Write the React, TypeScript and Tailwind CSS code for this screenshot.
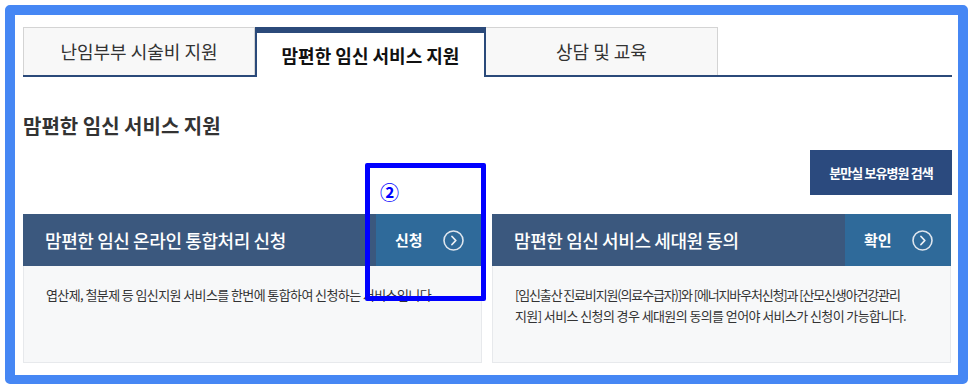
import React from "react";

const FONT = { fontFamily: '"Noto Sans CJK KR", "Noto Sans", sans-serif' };

function CircleArrow() {
  return (
    <svg width="21" height="21" viewBox="0 0 21 21" fill="none">
      <circle cx="10.5" cy="10.5" r="9.5" stroke="#dfe6ee" strokeWidth="1.6" />
      <path d="M9 6.5 L12.8 10.5 L9 14.5" stroke="#eef2f6" strokeWidth="1.8" strokeLinecap="round" strokeLinejoin="round" />
    </svg>
  );
}

interface CardProps {
  title: string;
  action: string;
  children: React.ReactNode;
}

function ServiceCard({ title, action, children }: CardProps) {
  return (
    <div className="flex flex-col w-[459px]">
      {/* header */}
      <div className="flex h-[52px] bg-[#3b587e]">
        <div className="flex-1 flex items-center pl-[22px] text-white text-[18px] font-medium tracking-[-0.4px]">
          {title}
        </div>
        <div className="w-[106px] bg-[#2f6a9a] flex items-center justify-between pl-[19px] pr-[18px]">
          <span className="text-white text-[15px] font-bold">{action}</span>
          <CircleArrow />
        </div>
      </div>
      {/* body */}
      <div className="h-[97px] bg-[#f7f8f9] border border-t-0 border-[#e7e9ec] pl-[22px] pr-[10px] pt-[18px] text-[13px] leading-[21px] tracking-[-0.6px] text-[#333]">
        {children}
      </div>
    </div>
  );
}

export default function App() {
  return (
    <div className="relative w-[973px] h-[387px] bg-white p-[5px] pb-[3px]" style={FONT}>
      <div className="h-full border-[10px] border-b-[9px] border-[#4687f4] rounded-[5px] bg-white pl-2 pr-[6px] pt-3">
        {/* Tabs */}
        <div className="flex h-[50px]">
          <div className="w-[232px] bg-[#f8f8f8] border border-b-0 border-[#d4d4d4] flex flex-col">
            <div className="flex-1 flex items-center justify-center text-[18px] text-[#333]">
              난임부부 시술비 지원
            </div>
            <div className="h-[2px] bg-[#2b4a7a] -mx-px" />
          </div>
          <div className="w-[231px] bg-white border-x-2 border-t-[6px] border-[#2b4a7a] flex items-center justify-center text-[18px] font-bold text-[#111]">
            맘편한 임신 서비스 지원
          </div>
          <div className="w-[232px] bg-[#f8f8f8] border border-b-0 border-l-0 border-[#d4d4d4] flex flex-col">
            <div className="flex-1 flex items-center justify-center text-[18px] text-[#333]">
              상담 및 교육
            </div>
            <div className="h-[2px] bg-[#2b4a7a] -mr-px" />
          </div>
          <div className="flex-1 flex flex-col justify-end">
            <div className="h-[2px] bg-[#2b4a7a]" />
          </div>
        </div>

        {/* Section title */}
        <h2 className="mt-[37px] h-[24px] leading-[24px] text-[20px] font-bold text-[#333]">
          맘편한 임신 서비스 지원
        </h2>

        <div className="flex justify-end mt-3">
          <button className="w-[142px] h-[45px] bg-[#2b4a7e] text-white text-[13px] font-bold tracking-[-0.9px]">
            분만실 보유병원 검색
          </button>
        </div>

        {/* Cards */}
        <div className="flex gap-[10px] mt-[19px]">
          <ServiceCard title="맘편한 임신 온라인 통합처리 신청" action="신청">
            엽산제, 철분제 등 임신지원 서비스를 한번에 통합하여 신청하는 서비스입니다.
          </ServiceCard>
          <ServiceCard title="맘편한 임신 서비스 세대원 동의" action="확인">
            <span className="whitespace-nowrap tracking-[-1.15px]">[임신출산 진료비지원(의료수급자)]와 [에너지바우처신청]과 [산모신생아건강관리</span>
            <br />
            <span className="whitespace-nowrap">지원] 서비스 신청의 경우 세대원의 동의를 얻어야 서비스가 신청이 가능합니다.</span>
          </ServiceCard>
        </div>
      </div>

      {/* Annotation overlay */}
      <div className="absolute left-[365px] top-[163px] w-[121px] h-[138px] border-[5px] border-[#0000ff] rounded-[2px]">
        <span className="absolute left-[10px] top-[14px] text-[19px] font-bold leading-none text-[#0000ff]">②</span>
      </div>
    </div>
  );
}
